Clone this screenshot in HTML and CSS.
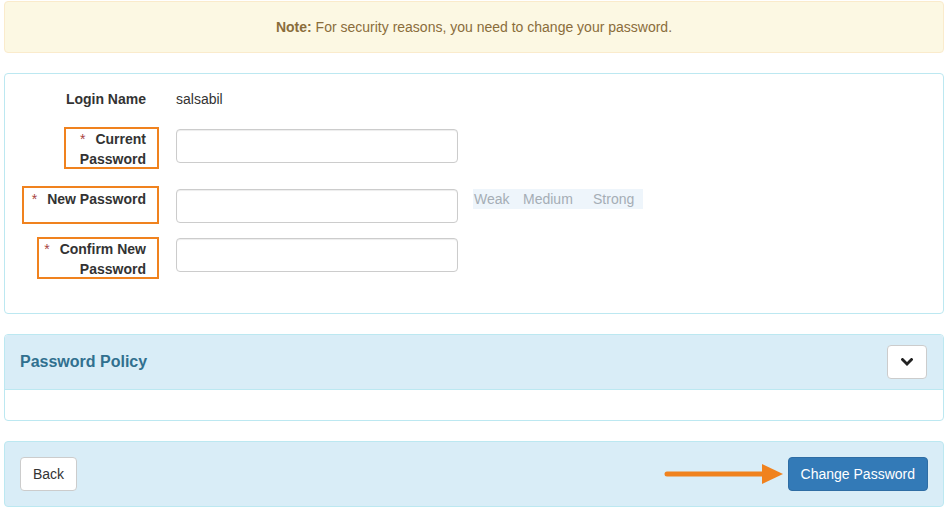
FILE: index.html
```html
<!DOCTYPE html>
<html lang="en">
<head>
<meta charset="utf-8">
<title>Change Password</title>
<link rel="stylesheet" href="styles.css">
</head>
<body>
<div class="page">
  <div class="alert"><strong>Note:</strong> For security reasons, you need to change your password.</div>

  <div class="panel form-panel">
    <div class="form-body">
      <div class="row row-login">
        <div class="lbl plain">Login Name</div>
        <div class="field static">salsabil</div>
      </div>
      <div class="row row-current">
        <div class="lbl"><span class="mark mark-current"><span class="req">*</span> Current<br>Password</span></div>
        <div class="field"><input type="password" class="input"></div>
      </div>
      <div class="row row-new">
        <div class="lbl"><span class="mark mark-new"><span class="req">*</span> New Password</span></div>
        <div class="field">
          <input type="password" class="input">
          <div class="strength"><span class="s-weak">Weak</span><span class="s-medium">Medium</span><span class="s-strong">Strong</span></div>
        </div>
      </div>
      <div class="row row-confirm">
        <div class="lbl"><span class="mark mark-confirm"><span class="req">*</span> Confirm New<br>Password</span></div>
        <div class="field"><input type="password" class="input"></div>
      </div>
    </div>
  </div>

  <div class="panel info-panel policy-panel">
    <div class="panel-heading">
      <h3 class="panel-title">Password Policy</h3>
      <button class="btn btn-default btn-toggle" type="button" aria-label="Expand">
        <svg width="12" height="9" viewBox="0 0 12 9"><path d="M1.5 1.5 L6 6 L10.5 1.5" fill="none" stroke="#222" stroke-width="2.8" stroke-linecap="square"/></svg>
      </button>
    </div>
    <div class="panel-body"></div>
  </div>

  <div class="panel info-panel footer-panel">
    <button class="btn btn-default" type="button">Back</button>
    <div class="footer-right">
      <svg class="arrow" width="122" height="22" viewBox="0 0 122 22"><line x1="3" y1="11" x2="100" y2="11" stroke="#f0821e" stroke-width="5" stroke-linecap="round"/><polygon points="98,1 119,11 98,21" fill="#f0821e"/></svg>
      <button class="btn btn-primary" type="button">Change Password</button>
    </div>
  </div>
</div>
</body>
</html>
```

FILE: styles.css
```css
* { box-sizing: border-box; }

body {
  margin: 0;
  font-family: "Liberation Sans", Arial, Helvetica, sans-serif;
  font-size: 14px;
  line-height: 20px;
  color: #333;
  background: #fff;
}

.page {
  margin: 1px 6px 0 4px;
}

.alert {
  background: #fcf8e3;
  border: 1px solid #faebcc;
  border-radius: 4px;
  color: #8a6d3b;
  text-align: center;
  padding: 15px;
  margin-bottom: 20px;
}

.panel {
  border: 1px solid #bce8f1;
  border-radius: 4px;
  background: #fff;
  margin-bottom: 20px;
}

.form-body {
  padding: 15px 0 34px 0;
}

.row {
  display: flex;
  align-items: flex-start;
}

.row-current { margin-top: 20px; }
.row-new { margin-top: 20px; }
.row-confirm { margin-top: 14px; }

.lbl {
  width: 156px;
  flex: none;
  display: flex;
  justify-content: flex-end;
  padding-right: 2px;
  font-weight: bold;
  text-align: right;
}

.lbl.plain {
  padding-right: 15px;
}

.field {
  padding-left: 15px;
  display: flex;
  align-items: flex-start;
  gap: 15px;
}

.mark {
  display: inline-block;
  border: 2px solid #f0821e;
  line-height: 20px;
  padding: 0 11px 0 14px;
}

.mark-current { margin-top: -2px; height: 42px; }
.mark-new { margin-top: -3px; padding: 1px 11px 13px 8px; }
.mark-confirm { margin-top: -1px; height: 42px; padding: 0 11px 0 5px; }

.req {
  color: #a94442;
  font-weight: normal;
  margin-right: 6px;
}

.input {
  width: 282px;
  height: 34px;
  border: 1px solid #ccc;
  border-radius: 4px;
  box-shadow: inset 0 1px 1px rgba(0, 0, 0, .075);
  padding: 6px 12px;
  font: inherit;
  background: #fff;
}

.strength {
  display: flex;
  height: 20px;
  width: 170px;
  background: #eef5fb;
  color: #a5adb5;
  line-height: 20px;
}

.s-weak { width: 50px; padding-left: 1px; }
.s-medium { width: 70px; }
.s-strong { width: 50px; }

.info-panel .panel-heading {
  background: #d9edf7;
  border-bottom: 1px solid #bce8f1;
  border-radius: 3px 3px 0 0;
  padding: 10px 16px 10px 15px;
  display: flex;
  align-items: center;
  justify-content: space-between;
}

.panel-title {
  margin: 0;
  font-size: 16px;
  font-weight: bold;
  color: #31708f;
  line-height: 20px;
}

.panel-body {
  height: 30px;
}

.btn {
  font: inherit;
  height: 34px;
  padding: 6px 12px;
  border-radius: 4px;
  border: 1px solid #ccc;
  background: #fff;
  color: #333;
  line-height: 20px;
  cursor: pointer;
}

.btn-toggle {
  width: 40px;
  display: flex;
  align-items: center;
  justify-content: center;
  padding: 0;
}

.btn-primary {
  background: #337ab7;
  border-color: #2e6da4;
  color: #fff;
}

.footer-panel {
  background: #d9edf7;
  padding: 15px;
  display: flex;
  align-items: center;
  justify-content: space-between;
  margin-bottom: 0;
}

.footer-right {
  display: flex;
  align-items: center;
}

.arrow {
  margin-right: 2px;
}
```
